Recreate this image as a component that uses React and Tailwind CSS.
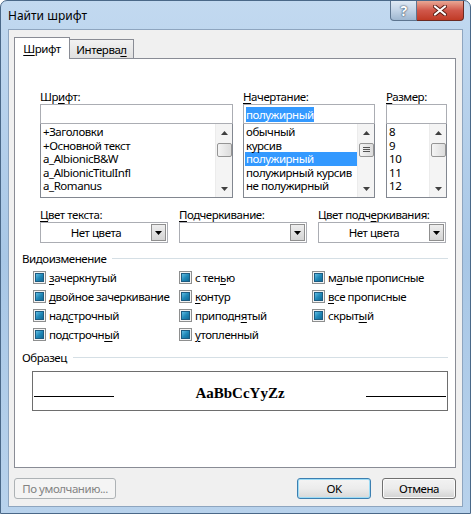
import React from "react";

const UI = "font-['Noto_Sans',sans-serif] text-[11.5px] leading-[15px] tracking-[-0.45px] text-black";

function U({ children }) {
  return <span className="underline underline-offset-[2px] decoration-1">{children}</span>;
}

function Tri({ up, color = "#404040" }) {
  return (
    <svg width="7" height="4" viewBox="0 0 7 4">
      <path d={up ? "M0 4h7L3.5 0z" : "M0 0h7L3.5 4z"} fill={color} />
    </svg>
  );
}

function ScrollBar({ grip }) {
  return (
    <div className="w-[17px] h-full flex flex-col items-center bg-[#f4f4f4] border-l border-[#ececec]">
      <div className="h-[17px] w-full flex items-center justify-center">
        <Tri up />
      </div>
      <div className="mt-[2px] w-[15px] h-[14px] rounded-[2px] border border-[#959595] bg-gradient-to-r from-[#f4f4f4] to-[#dcdcdc] flex items-center justify-center">
        {grip && (
          <svg width="7" height="6" viewBox="0 0 7 6">
            <path d="M0 0.5h7M0 2.5h7M0 4.5h7" stroke="#555" strokeWidth="1" />
          </svg>
        )}
      </div>
      <div className="flex-1" />
      <div className="h-[17px] w-full flex items-center justify-center">
        <Tri />
      </div>
    </div>
  );
}

function ListBox({ value, items, selected, grip, highlightValue }) {
  return (
    <div className="flex flex-col">
      <div className="h-[20px] border border-[#abadb3] bg-white flex items-center px-[2px]">
        {highlightValue ? <span className="bg-[#3399ff] text-white">{value}</span> : value}
      </div>
      <div className="h-[74px] border border-t-0 border-[#828790] bg-white flex">
        <div className="flex-1 min-w-0 pt-[1px] pl-[1px]">
          {items.map((it) => (
            <div
              key={it}
              className={
                it === selected
                  ? "h-[13.5px] leading-[13.5px] px-[1px] whitespace-nowrap bg-[#3399ff] text-white"
                  : "h-[13.5px] leading-[13.5px] px-[1px] whitespace-nowrap"
              }
            >
              {it}
            </div>
          ))}
        </div>
        <ScrollBar grip={grip} />
      </div>
    </div>
  );
}

function Combo({ value }) {
  return (
    <div className="h-[21px] border border-[#abadb3] bg-white flex items-center">
      <div className="flex-1 text-center">{value}</div>
      <div className="w-[15px] h-[17px] mr-[1px] border border-[#8f8f8f] bg-gradient-to-b from-[#eeeeee] to-[#d4d4d4] flex items-center justify-center">
        <Tri color="#000" />
      </div>
    </div>
  );
}

function Check({ children }) {
  return (
    <div className="h-[19px] flex items-center">
      <div className="w-[13px] h-[13px] border border-[#8e8f8f] bg-[#f3f3f3] p-[1px]">
        <div className="w-full h-full border border-[#1d5b80] bg-gradient-to-br from-[#5cbde3] via-[#2189b8] to-[#0f6a97]" />
      </div>
      <span className="ml-[2px] pl-[1px]">{children}</span>
    </div>
  );
}

function Group({ title }) {
  return (
    <div className="flex items-center gap-[6px]">
      <span>{title}</span>
      <div className="flex-1 h-px bg-[#d5dfe5]" />
    </div>
  );
}

export default function App() {
  return (
    <div className={`w-[471px] h-[514px] flex flex-col rounded-t-[7px] border border-[#4a6888] bg-gradient-to-b from-[#c2d9f0] via-[#a8c7e6] to-[#b8d2ec] overflow-hidden ${UI}`}>
      {/* caption */}
      <div className="h-[28px] flex items-start justify-between">
        <span className="ml-[7px] mt-[7px] text-[12px] tracking-normal">Найти шрифт</span>
        <div className="flex mr-[6px]">
          <div className="w-[27px] h-[20px] rounded-bl-[4px] border border-t-0 border-[#5d7590] bg-gradient-to-b from-[#dfe9f4] via-[#c2d3e6] to-[#9fb7d0] flex items-center justify-center">
            <span className="text-white font-bold text-[14px] leading-none [text-shadow:0_0_2px_#33475e,0_0_1px_#33475e]">?</span>
          </div>
          <div className="w-[47px] h-[20px] rounded-br-[4px] border border-t-0 border-l-0 border-[#6b2a22] bg-gradient-to-b from-[#e8a795] via-[#d0574a] to-[#c03a25] flex items-center justify-center">
            <svg width="14" height="11" viewBox="0 0 14 11">
              <path d="M2 1.5L12 9.5M12 1.5L2 9.5" stroke="#5a1e16" strokeWidth="4" strokeLinecap="round" />
              <path d="M2 1.5L12 9.5M12 1.5L2 9.5" stroke="#ffffff" strokeWidth="2.2" strokeLinecap="round" />
            </svg>
          </div>
        </div>
      </div>

      {/* client area */}
      <div className="mx-[7px] mb-[6px] flex-1 border border-[#8ea5bf] bg-[#f0f0f0] flex flex-col">
        {/* tabs */}
        <div className="pt-[7px] pl-[5px] flex items-end">
          <div className="relative z-10 w-[56px] h-[22px] mb-[-1px] border border-b-0 border-[#898c95] bg-white flex items-center justify-center">
            <span><U>Ш</U>рифт</span>
          </div>
          <div className="w-[64px] h-[19px] border border-l-0 border-b-0 border-[#898c95] bg-gradient-to-b from-[#f2f2f2] to-[#e0e0e0] flex items-center justify-center">
            <span>Интерва<U>л</U></span>
          </div>
        </div>

        {/* tab page */}
        <div className="ml-[5px] mr-[6px] h-[410px] border border-[#898c95] bg-white px-[7px] pt-[30px]">
          <div className="ml-[18px] grid grid-cols-[193px_132px_62px] gap-x-[10px]">
            <div>
              <div className="h-[15px]">Шр<U>и</U>фт:</div>
              <ListBox
                value=""
                items={["+Заголовки", "+Основной текст", "a_AlbionicB&W", "a_AlbionicTitulInfl", "a_Romanus"]}
              />
            </div>
            <div>
              <div className="h-[15px]"><U>Н</U>ачертание:</div>
              <ListBox
                value="полужирный"
                highlightValue
                grip
                selected="полужирный"
                items={["обычный", "курсив", "полужирный", "полужирный курсив", "не полужирный"]}
              />
            </div>
            <div className="ml-[1px]">
              <div className="h-[15px]"><U>Р</U>азмер:</div>
              <ListBox value="" items={["8", "9", "10", "11", "12"]} />
            </div>
          </div>

          <div className="ml-[18px] mt-[9px] grid grid-cols-[128px_128px_128px] gap-x-[11px]">
            <div>
              <div className="h-[15px]"><U>Ц</U>вет текста:</div>
              <Combo value="Нет цвета" />
            </div>
            <div>
              <div className="h-[15px]"><U>П</U>одчеркивание:</div>
              <Combo value="" />
            </div>
            <div>
              <div className="h-[15px]">Цвет подч<U>е</U>ркивания:</div>
              <Combo value="Нет цвета" />
            </div>
          </div>

          <div className="mt-[8px]">
            <Group title="Видоизменение" />
          </div>
          <div className="ml-[11px] mt-[2px] grid grid-cols-[146px_133px_1fr]">
            <Check><U>з</U>ачеркнутый</Check>
            <Check>с тен<U>ь</U>ю</Check>
            <Check>м<U>а</U>лые прописные</Check>
            <Check><U>д</U>войное зачеркивание</Check>
            <Check><U>к</U>онтур</Check>
            <Check><U>в</U>се прописные</Check>
            <Check>над<U>с</U>трочный</Check>
            <Check>приподн<U>я</U>тый</Check>
            <Check>скрыт<U>ы</U>й</Check>
            <Check>подстрочн<U>ы</U>й</Check>
            <Check><U>у</U>топленный</Check>
          </div>

          <div className="mt-[6px]">
            <Group title="Образец" />
          </div>
          <div className="ml-[10px] mt-[6px] h-[40px] border border-[#6e6e6e] grid grid-cols-[80px_1fr_80px] items-center px-[1px]">
            <div className="h-px bg-black mt-[11px]" />
            <div className="text-center mt-[3px] font-['Liberation_Serif',serif] font-bold text-[15px] leading-[18px] tracking-normal">AaBbCcYyZz</div>
            <div className="h-px bg-black mt-[11px]" />
          </div>
        </div>

        {/* buttons */}
        <div className="mt-[10px] pl-[5px] pr-[6px] flex items-center">
          <div className="w-[102px] h-[21px] rounded-[3px] border border-[#adb2b5] bg-[#f4f4f4] text-[#838383] flex items-center justify-center">
            По умолчанию...
          </div>
          <div className="flex-1" />
          <div className="w-[74px] h-[21px] rounded-[3px] border border-[#3c7fb1] shadow-[inset_0_0_0_1px_#9ddcf6] bg-gradient-to-b from-[#f4f4f4] via-[#ececec] to-[#d8d8d8] flex items-center justify-center">
            OK
          </div>
          <div className="ml-[11px] w-[74px] h-[21px] rounded-[3px] border border-[#707070] shadow-[inset_0_0_0_1px_#fbfbfb] bg-gradient-to-b from-[#f2f2f2] via-[#ebebeb] to-[#d3d3d3] flex items-center justify-center">
            Отмена
          </div>
        </div>
      </div>
    </div>
  );
}
